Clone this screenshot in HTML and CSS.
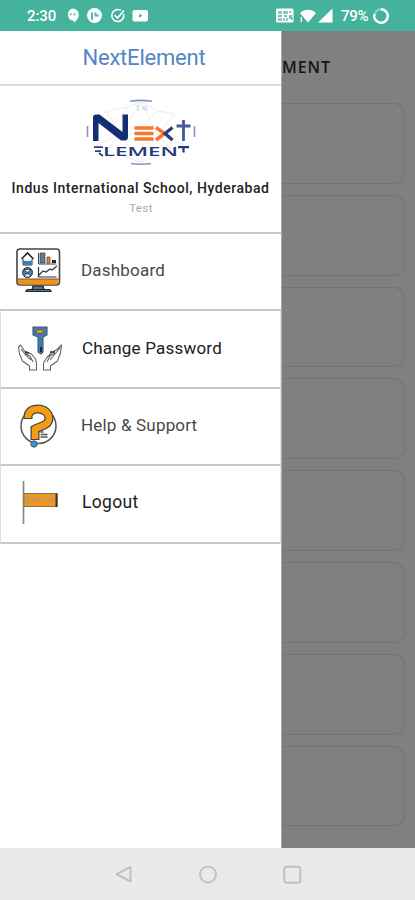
FILE: index.html
```html
<!DOCTYPE html>
<html lang="en">
<head>
<meta charset="utf-8">
<meta name="viewport" content="width=device-width, initial-scale=1">
<title>NextElement</title>
<link rel="stylesheet" href="styles.css">
</head>
<body>
<div class="phone">
  <header class="status">
    <span class="clock">2:30</span>
    <svg class="status-left" width="84" height="18" viewBox="0 0 84 18">
      <path fill="#fff" d="M8.500 1.500a6.300 6.300 0 0 1 6.300 6.300c0 3.500-2.500 6-5 8v-2A6.300 6.300 0 0 1 8.500 1.500z"/>
      <path fill="#8fd0c2" d="M5.500 6h2.300v2.500H5.500zM9.200 6h2.300v2.500H9.200z"/>
      <circle cx="30.500" cy="8.500" r="7.500" fill="#fff"/>
      <path fill="none" stroke="#45b29d" stroke-width="1.800" d="M28 13V5.500M31.500 5.500v3h3"/>
      <path fill="none" stroke="#fff" stroke-width="1.500" d="M59.500 6.700a6 6 0 1 1-2.600-3.300"/>
      <path fill="none" stroke="#fff" stroke-width="1.700" d="M50.500 8l3 3 6.500-7.500"/>
      <rect x="68.500" y="3" width="15.500" height="11.500" rx="2" fill="#fff"/>
      <path fill="#45b29d" d="M75 6.700l3.500 2-3.500 2z"/>
    </svg>
    <svg class="status-right" width="58" height="18" viewBox="0 0 58 18">
      <rect x="0" y="1.500" width="17.500" height="14" rx="1.500" fill="#fff"/>
      <path fill="none" stroke="#45b29d" stroke-width="1.300" d="M3 4v3M5 4v3M7 5h2v2M11 4v3M14 4v2M2 9h4M8 9h3M13 9h3M3 11v3M5 11v3M8 11v3M11 11v3M13 11h3v2"/>
      <path fill="#fff" d="M24 6c4.500-4.500 11.500-4.500 16 0l-8 9.500z"/>
      <path fill="none" stroke="#fff" stroke-width="1.300" d="M25.300 10v5"/>
      <path fill="#fff" d="M56.500 1.500v14H42z"/>
    </svg>
    <span class="battery">79%</span>
    <svg class="ring" width="18" height="18" viewBox="0 0 18 18">
      <circle cx="9" cy="9" r="6.800" fill="none" stroke="#8fd0c4" stroke-width="2"/>
      <path fill="none" stroke="#fff" stroke-width="2.400" d="M9 2.200A6.800 6.800 0 1 1 2.500 7"/>
    </svg>
  </header>

  <main class="screen">
    <aside class="drawer">
      <h1 class="brand">NextElement</h1>
      <section class="profile">
        <svg class="logo" width="112" height="68" viewBox="0 0 112 68">
          <g fill="none" stroke="#e6e9ed" stroke-width=".8">
            <path d="M22 12L43 8l13-5 17 9 17 3M10 22l12-10 13 23 21-32 16 32 18-20M8 48l27-13 37 0 33 13M23 50l12-15 20 28 17-28 15 17M23 52l32 11 32-11M43 8L30 25M73 12L58 26"/>
          </g>
          <g fill="none" stroke="#8695c2" stroke-width="1.600">
            <path d="M45 2.300q11-1.800 22 0M46 64.500q10 1.500 20 0M2.500 27v11M109.500 27v11"/>
          </g>
          <path d="M51 7h3l-2 4h3M57 11l2-4v4M61 7v4h2" fill="none" stroke="#c3c8d4" stroke-width=".8"/>
          <path d="M8 42V18.500Q8 15.500 11 15.500h3.500L37.500 33V15.500H43V38q0 3.500-3.500 3.500H36L13.500 24v18z" fill="#132e73"/>
          <path d="M49.500 29h19M49.500 34.500h19M49.500 40h19" fill="none" stroke="#f4772e" stroke-width="3.300"/>
          <path d="M71 28.500l8.500 6-8.500 6.500" fill="none" stroke="#f4772e" stroke-width="3.600"/>
          <path d="M87.500 28.500l-7.500 6 7.500 6.500" fill="none" stroke="#253d78" stroke-width="3.300"/>
          <path d="M98.500 21v21M91.500 27h14" fill="none" stroke="#455b91" stroke-width="2.800"/>
          <path d="M9 48.200h9M10 52.200h6M14 54l4 3" fill="none" stroke="#2b427d" stroke-width="1.800"/>
          <text class="logo-text" x="18" y="57" textLength="75" lengthAdjust="spacingAndGlyphs">LEMEN</text>
          <path d="M93 48.200h11M98.500 48v5.500" fill="none" stroke="#203876" stroke-width="2.200"/>
        </svg>
        <p class="school">Indus International School, Hyderabad</p>
        <p class="role">Test</p>
      </section>
      <nav class="menu">
        <a class="item">
          <svg class="icon" width="48" height="48" viewBox="0 0 48 48">
            <rect x="3" y="3" width="42.500" height="36" rx="3" fill="#fff" stroke="#444" stroke-width="1.600"/>
            <path fill="#f29319" d="M4 33h40.500v3.500q0 2-2 2H6q-2 0-2-2z"/>
            <path d="M3 33h42" stroke="#695a43"/>
            <path d="M7.500 13l6-6 6 6" fill="none" stroke="#222" stroke-width="1.600"/>
            <path d="M9 13v6h9v-6" fill="#e9f5ff" stroke="#333"/><path d="M9 15h9v4H9z" fill="#3c80b8"/>
            <circle cx="13.500" cy="26.500" r="5" fill="#407fb9" stroke="#29394b"/>
            <path d="M13.500 26.500l-3.500-3h7zM11 28h5v3h-5z" fill="#fff" stroke="#222" stroke-width=".7"/>
            <path d="M24.500 7v11h18" fill="none" stroke="#444"/>
            <path fill="#607b94" stroke="#354453" stroke-width=".7" d="M26 7h5v10h-5z"/>
            <path fill="#e29125" stroke="#493e31" stroke-width=".7" d="M33 11h3v6h-3z"/><path fill="#222" d="M38 14h4v3h-4z"/>
            <path d="M24.500 21v10h18M25 29l4-4 3 1 4-3 2 1 5-4" fill="none" stroke="#333" stroke-width="1.200"/>
            <path fill="#527896" stroke="#222" stroke-width="1.200" d="M19 40h10l1 3.500H18zM14 43.500h21q2 0 2 2H12q0-2 2-2z"/>
          </svg>
          <span class="label">Dashboard</span>
        </a>
        <a class="item boxed">
          <svg class="icon" width="48" height="48" viewBox="0 0 48 48">
            <path d="M17 3h14v8l-4 2v15l-2 2-3-2V13l-5-2z" fill="#3f7db7" stroke="#48576a" stroke-width="1.100"/>
            <rect x="20.500" y="5.500" width="6.500" height="4" rx="1" fill="#d59a40" stroke="#5b5035" stroke-width=".8"/>
            <path d="M25 23v5" stroke="#19284a" stroke-width="2"/>
            <g fill="#fff" stroke="#666" stroke-width="1.100" stroke-linejoin="round">
              <path d="M13.500 46v-4l-7-5-3-7-1-7 2-2 4 6 7 3 4 5 1 4v7zM5 25l4 5 6 6M9 29l5 3 3 6"/>
              <path d="M34.500 46v-4l7-5 3-8 1-8-4 4-6 4-5 5-3 5v7zM44 24l-5 6-5 6M39 29l-5 3-3 6"/>
            </g>
            <path d="M34 28l5 0M9 28l4 1" fill="none" stroke="#333" stroke-width="1.500"/>
          </svg>
          <span class="label dark">Change Password</span>
        </a>
        <a class="item boxed help">
          <svg class="icon" width="48" height="48" viewBox="0 0 48 48">
            <circle cx="22.500" cy="25" r="17.500" fill="#fff" stroke="#555" stroke-width="1.500"/>
            <path d="M12 18v-2c0-5 4-8 10-8s11 4 11 9c0 8-9 8-14 11v11" fill="none" stroke="#444" stroke-width="9"/>
            <path d="M12 17v-1c0-5 4-8 10-8s11 4 11 9c0 8-9 8-14 11v10" fill="none" stroke="#f59b16" stroke-width="6.500"/>
            <path d="M24.500 31h3M24.500 33.500h7M24.500 36h7" stroke="#555" stroke-width="1.300"/>
            <circle cx="18" cy="43" r="3.200" fill="#438bd0" stroke="#4e6073"/>
          </svg>
          <span class="label">Help &amp; Support</span>
        </a>
        <a class="item boxed logout">
          <svg class="icon" width="48" height="48" viewBox="0 0 48 48">
            <path d="M7.500 3v43" stroke="#888" stroke-width="1.700"/>
            <rect x="8" y="15.500" width="33" height="13" fill="#f29618" stroke="#8f7049"/>
            <path d="M40.500 15V29" stroke="#333" stroke-width="2"/>
            <path d="M8 15.500h33" stroke="#777"/>
            <path d="M14 20h-3v4h3M11 22h3M17 20l3 4M20 20l-3 4M23 20v4M25 20h4M27 20v4M31 22h6M35 20l2 2-2 2" fill="none" stroke="#a69b91" stroke-width="1.400"/>
          </svg>
          <span class="label dark">Logout</span>
        </a>
      </nav>
    </aside>
    <section class="backdrop">
      <h2 class="page-title">MENT</h2>
      <div class="cards">
        <div class="card"></div><div class="card"></div><div class="card"></div><div class="card"></div>
        <div class="card"></div><div class="card"></div><div class="card"></div><div class="card"></div>
      </div>
    </section>
  </main>

  <footer class="navbar">
    <svg width="20" height="20" viewBox="0 0 20 20"><path d="M16.500 3v14.500L2.500 10.200z"/></svg>
    <svg width="20" height="20" viewBox="0 0 20 20"><circle cx="10" cy="10.500" r="8"/></svg>
    <svg width="20" height="20" viewBox="0 0 20 20"><rect x="2.300" y="2.700" width="16" height="16" rx="2.500"/></svg>
  </footer>
</div>
</body>
</html>
```
FILE: styles.css
```css
* { box-sizing: border-box; }
body { margin: 0; font-family: Roboto, "Liberation Sans", sans-serif; background: #fff; }
h1, h2, p { margin: 0; }
svg { display: block; flex: none; }
.phone { width: 415px; height: 900px; display: flex; flex-direction: column; overflow: hidden; }

.status { height: 31px; flex: none; display: flex; align-items: center; padding: 0 25px 0 27px; background: #45b29d; color: #fff; font-size: 15px; font-weight: 500; }
.clock { width: 37px; letter-spacing: -.1px; }
.status-right { margin-left: auto; }
.battery { width: 28px; margin-left: 7px; letter-spacing: -.3px; }
.ring { margin-left: 3px; }

.screen { flex: 1; display: flex; min-height: 0; }
.drawer { width: 282px; flex: none; background: #fff; border-right: 1px solid #aaa; }
.brand { height: 55px; border-bottom: 2px solid #dcdcdc; text-align: center; padding-left: 7px; font-size: 22px; line-height: 53px; font-weight: 400; letter-spacing: -.2px; color: #5585c5; }
.profile { height: 148px; border-bottom: 2px solid #c9c9c9; display: flex; flex-direction: column; align-items: center; padding-top: 13px; }
.logo-text { font: 600 12.5px "Open Sans", sans-serif; fill: #203876; }
.school { margin-top: 12px; font-size: 14px; line-height: 18px; font-weight: 500; letter-spacing: .53px; color: #222; white-space: nowrap; }
.role { margin-top: 3px; padding-left: 1px; font-size: 11.5px; line-height: 16px; letter-spacing: .4px; color: #aaa; }
.item { height: 77px; display: flex; align-items: center; padding: 0 0 3px 14px; border-bottom: 2px solid #c9c9c9; }
.boxed { height: 78px; padding-left: 15px; border-left: 1px solid #ddd; border-right: 1px solid #e6e6e6; }
.help { height: 77px; }
.label { margin-left: 19px; font-size: 17px; letter-spacing: .2px; color: #484848; }
.dark { margin-left: 18px; color: #202020; }
.help .label { margin-left: 17px; letter-spacing: .18px; }
.logout .label { font-size: 17.5px; letter-spacing: .35px; }
.logout { padding-bottom: 4px; }

.backdrop { flex: 1; background: #808080; }
.page-title { height: 72px; padding-top: 1px; font: 600 16px/70px "Open Sans", sans-serif; letter-spacing: .9px; color: #171717; }
.cards { display: grid; gap: 11px; padding-right: 10px; }
.card { height: 80.8px; border: 1px solid #747474; border-left: 0; border-radius: 0 11px 11px 0; }

.navbar { height: 52px; flex: none; display: flex; justify-content: center; align-items: center; gap: 64px; background: #eaeaea; }
.navbar svg { fill: none; stroke: #c1c1c1; stroke-width: 2; stroke-linejoin: round; }
```
